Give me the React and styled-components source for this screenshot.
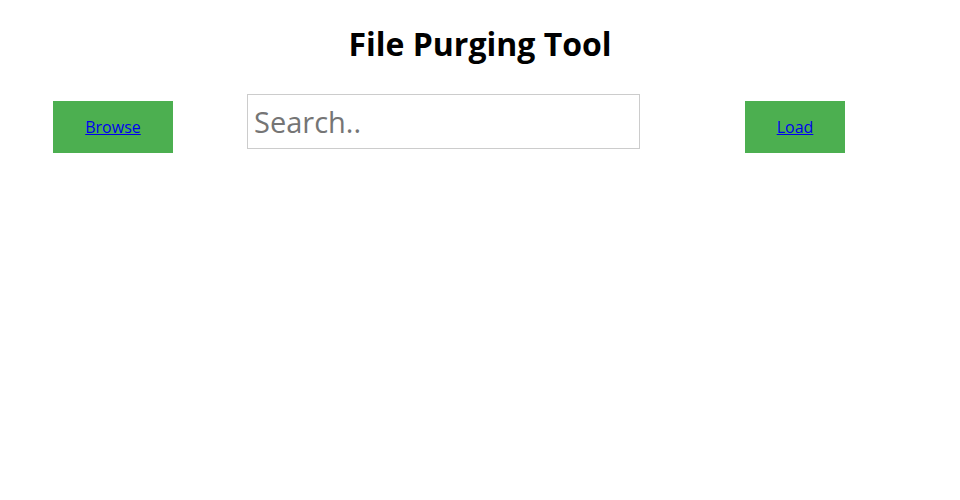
import styled, { createGlobalStyle } from "styled-components"

const Global = createGlobalStyle`
  body {
    margin: 0;
    font-family: "Open Sans", sans-serif;
    background: #fff;
  }
`

const Page = styled.div`
  display: flex;
  flex-direction: column;
`

const Title = styled.h1`
  margin: 22px 0 0;
  text-align: center;
  font-size: 32px;
  font-weight: 700;
  line-height: 44px;
  color: #000;
`

const Toolbar = styled.div`
  display: flex;
  align-items: flex-start;
  margin-top: 28px;
  padding-left: 53px;
`

const Button = styled.div`
  display: flex;
  align-items: center;
  justify-content: center;
  width: ${(p) => p.$width}px;
  height: 52px;
  margin-top: 7px;
  margin-left: ${(p) => p.$left || 0}px;
  background: #4caf50;
  flex-shrink: 0;

  a {
    color: #0000ee;
    font-size: 16px;
    text-decoration: underline;
  }
`

const Search = styled.input`
  box-sizing: border-box;
  width: 393px;
  height: 55px;
  margin-left: 74px;
  padding: 0 6px;
  border: 1px solid #ccc;
  font-family: "Open Sans", sans-serif;
  font-size: 29px;
  color: #333;
  outline: none;

  &::placeholder {
    color: #757575;
  }
`

const App = () => {
  return (
    <Page>
      <Global />
      <Title>File Purging Tool</Title>
      <Toolbar>
        <Button $width={120}>
          <a href="#">Browse</a>
        </Button>
        <Search placeholder="Search.." />
        <Button $width={100} $left={105}>
          <a href="#">Load</a>
        </Button>
      </Toolbar>
    </Page>
  )
}

export default App
